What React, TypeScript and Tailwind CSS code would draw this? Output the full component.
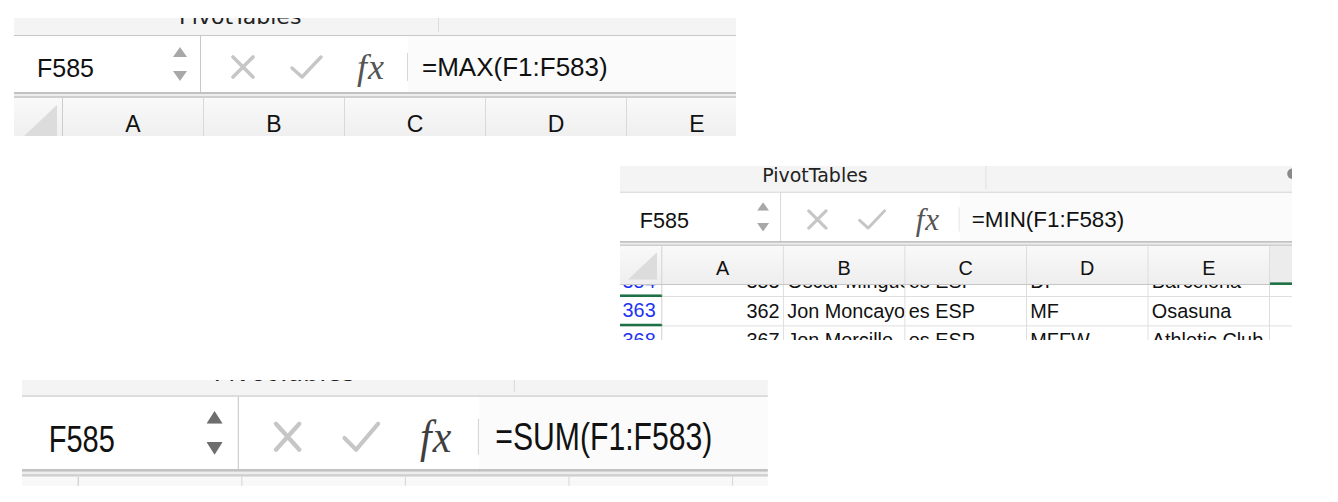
import React from "react";

type CellRow = {
  n: string;
  a: string;
  b: string;
  c: string;
  d: string;
  e: string;
  marked?: boolean;
};

type StripProps = {
  ribbon: string;
  formula: string;
  arrow: string;
  fx: string;
  tall?: string;
  blob?: boolean;
  selectedTail?: boolean;
  children?: React.ReactNode;
};

const LETTERS = ["A", "B", "C", "D", "E"];

const Arrow = ({ up, color }: { up?: boolean; color: string }) => (
  <svg width="14" height="10" viewBox="0 0 14 10">
    <path d={up ? "M7 0 L14 10 L0 10 Z" : "M0 0 L14 0 L7 10 Z"} fill={color} />
  </svg>
);

const ColumnHeader = ({ selectedTail }: { selectedTail?: boolean }) => (
  <div className="flex h-[45px] shrink-0 border-b border-[#bdbdbd] bg-linear-to-b from-[#f9f9f9] to-[#eeeeee]">
    <div className="flex w-[49px] shrink-0 items-end justify-end border-r border-[#cccccc] pr-[5px] pb-[5px]">
      <svg width="34" height="32" viewBox="0 0 34 32">
        <path d="M34 0 L34 32 L0 32 Z" fill="#dcdcdc" />
      </svg>
    </div>
    {LETTERS.map((l) => (
      <div
        key={l}
        className="flex w-[141px] shrink-0 items-center justify-center border-r border-[#d9d9d9] pt-[8px] text-[23px]"
      >
        {l}
      </div>
    ))}
    <div
      className={
        selectedTail
          ? "flex-1 shrink-0 border-b-[3px] border-[#1e7145] bg-[#ececec] -mb-px"
          : "flex-1 shrink-0"
      }
    />
  </div>
);

const DataRow = ({ row }: { row: CellRow }) => (
  <div className="flex h-[34px] shrink-0 text-[23px] leading-none">
    <div
      className={
        row.marked
          ? "flex w-[49px] shrink-0 items-center border-r border-[#c8c8c8] border-b-[3px] border-b-[#1e7145] pl-[3px] text-[#1f33f2]"
          : "flex w-[49px] shrink-0 items-center border-r border-b border-[#c8c8c8] pl-[3px] text-[#1f33f2]"
      }
    >
      {row.n}
    </div>
    <div className="flex w-[141px] shrink-0 items-center justify-end border-r border-b border-[#d9d9d9] pr-[4px]">
      {row.a}
    </div>
    <div className="flex w-[141px] shrink-0 items-center overflow-hidden whitespace-nowrap border-r border-b border-[#d9d9d9] pl-[4px]">
      {row.b}
    </div>
    <div className="flex w-[141px] shrink-0 items-center overflow-hidden whitespace-nowrap border-r border-b border-[#d9d9d9] pl-[4px]">
      {row.c}
    </div>
    <div className="flex w-[141px] shrink-0 items-center overflow-hidden whitespace-nowrap border-r border-b border-[#d9d9d9] pl-[4px]">
      {row.d}
    </div>
    <div className="flex w-[141px] shrink-0 items-center overflow-hidden whitespace-nowrap border-r border-b border-[#d9d9d9] pl-[4px]">
      {row.e}
    </div>
    <div className="flex-1 border-b border-[#d9d9d9]" />
  </div>
);

const Strip: React.FC<StripProps> = ({ ribbon, formula, arrow, fx, tall = "", blob, selectedTail, children }) => (
  <div className="flex h-full w-full flex-col overflow-hidden bg-white font-['Liberation_Sans',Arial,sans-serif] text-[#111111]">
    <div className={`flex shrink-0 items-end overflow-hidden border-b border-[#c8c8c8] bg-[#f4f4f4] ${ribbon}`}>
      <div className="w-[165px] shrink-0" />
      <span className="w-[259px] shrink-0 whitespace-nowrap pb-[7px] font-['DejaVu_Sans',sans-serif] text-[22px] leading-none text-[#222]">
        PivotTables
      </span>
      <div className="mb-[3px] h-[60px] w-px shrink-0 bg-[#dcdcdc]" />
      <div className="flex-1" />
      {blob && <div className="mb-auto mt-[3px] h-[12px] w-[6px] shrink-0 rounded-l-full bg-[#8a8a8a]" />}
    </div>

    <div className="flex h-[56px] shrink-0">
      <div className="flex w-[187px] shrink-0 items-center border-r border-[#c8c8c8] bg-white pl-[23px] pr-[13px]">
        <span className={`flex-1 pt-[8px] text-[25px] leading-none ${tall}`}>F585</span>
        <div className="flex flex-col gap-[14px]">
          <Arrow up color={arrow} />
          <Arrow color={arrow} />
        </div>
      </div>
      <div className="flex shrink-0 items-center bg-white pt-[6px]">
        <svg className="ml-[29px]" width="26" height="24" viewBox="0 0 26 24">
          <path d="M3 2 L23 22 M23 2 L3 22" stroke="#c6c6c6" strokeWidth="3.6" strokeLinecap="round" />
        </svg>
        <svg className="ml-[34px]" width="33" height="24" viewBox="0 0 33 24">
          <path d="M2 13 L12 22 L31 2" stroke="#c6c6c6" strokeWidth="3.4" fill="none" strokeLinecap="round" strokeLinejoin="round" />
        </svg>
        <span
          className={`ml-[34px] w-[31px] font-['Liberation_Serif',serif] text-[36px] italic leading-none tracking-[1px] ${fx}`}
        >
          fx
        </span>
        <div className="ml-[19px] h-[28px] w-px bg-[#d6d6d6]" />
      </div>
      <div className="flex flex-1 items-center bg-[#fbfbfb] pl-[14px] pt-[5px]">
        <span className={`whitespace-nowrap text-[26px] leading-none ${tall}`}>{formula}</span>
      </div>
    </div>

    <div className="h-[6px] shrink-0 border-t-2 border-b-2 border-t-[#c2c2c2] border-b-[#cfcfcf] bg-[#ededed]" />

    <ColumnHeader selectedTail={selectedTail} />
    {children}
  </div>
);

const rows: CellRow[] = [
  { n: "354", a: "353", b: "Óscar Mingueza", c: "es ESP", d: "DF", e: "Barcelona", marked: true },
  { n: "363", a: "362", b: "Jon Moncayo", c: "es ESP", d: "MF", e: "Osasuna", marked: true },
  { n: "368", a: "367", b: "Jon Morcillo", c: "es ESP", d: "MFFW", e: "Athletic Club" },
];

export default function App() {
  return (
    <div className="flex h-[502px] w-[1338px] flex-col items-start overflow-hidden bg-white">
      <div className="ml-[14px] mt-[18px] h-[118px] w-[722px] shrink-0 overflow-hidden">
        <Strip ribbon="h-[18px]" formula="=MAX(F1:F583)" arrow="#a8a8a8" fx="text-[#555555]" />
      </div>

      <div className="ml-[620px] mt-[30px] h-[174px] w-[672px] shrink-0 overflow-hidden">
        <div className="h-[202px] w-[780px] origin-top-left scale-[0.862]">
          <Strip ribbon="h-[31px]" formula="=MIN(F1:F583)" arrow="#a8a8a8" fx="text-[#555555]" blob selectedTail>
            <div className="flex h-[14px] shrink-0 flex-col justify-end overflow-hidden">
              <DataRow row={rows[0]} />
            </div>
            <DataRow row={rows[1]} />
            <DataRow row={rows[2]} />
          </Strip>
        </div>
      </div>

      <div className="ml-[22px] mt-[40px] h-[106px] w-[746px] shrink-0 overflow-hidden">
        <div className="h-[82px] w-[643px] origin-top-left scale-x-[1.16] scale-y-[1.29]">
          <Strip
            ribbon="h-[13px]"
            formula="=SUM(F1:F583)"
            arrow="#6e6e6e"
            fx="text-[#3f3f3f]"
            tall="scale-y-[1.15]"
          />
        </div>
      </div>
    </div>
  );
}
